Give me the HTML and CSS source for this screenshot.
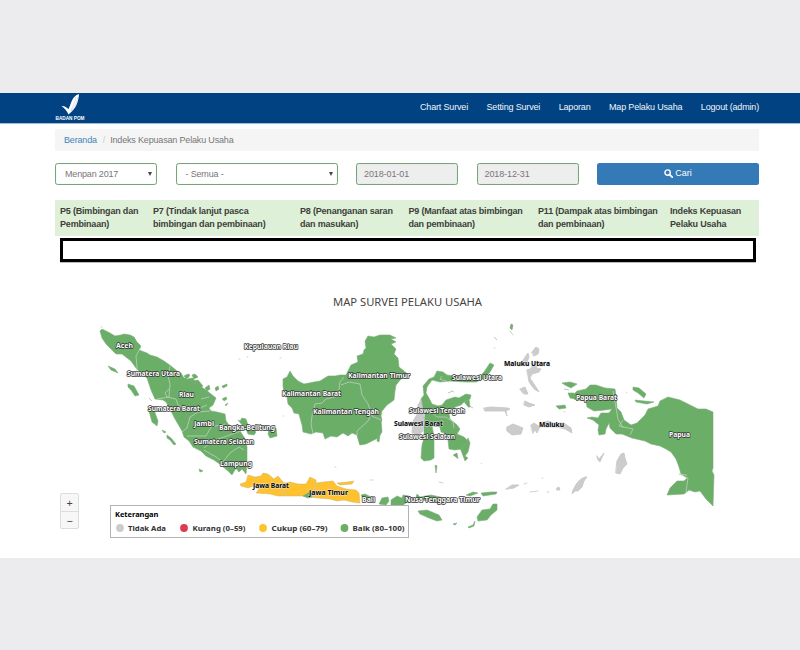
FILE: index.html
```html
<!DOCTYPE html>
<html lang="id">
<head>
<meta charset="utf-8">
<title>Indeks Kepuasan Pelaku Usaha</title>
<link rel="stylesheet" href="styles.css">
</head>
<body>
<div class="page">
  <header class="navbar">
    <svg class="brand" viewBox="0 0 32 30" width="32" height="30">
      <path d="M6.500 13c2.500-.5 5 1 7 3C16 12 16.500 3 24 1c-.5 8-3 15-10.500 20.500C12 18 9.500 15 6.500 13z" fill="#fff"/>
      <path d="M21 4c-1 5-3 10-5.500 14M22.800 4c-1 6-3 11-6.500 14" fill="none" stroke="#9db6d0" stroke-width=".4"/>
      <text x="0.500" y="26.700" textLength="29" lengthAdjust="spacingAndGlyphs">BADAN POM</text>
    </svg>
    <nav class="menu"><a>Chart Survei</a><a>Setting Survei</a><a>Laporan</a><a>Map Pelaku Usaha</a><a>Logout (admin)</a></nav>
  </header>
  <main>
    <div class="crumbs"><a>Beranda</a><i>/</i><span>Indeks Kepuasan Pelaku Usaha</span></div>
    <form class="filters">
      <div class="field">Menpan 2017<b class="caret"></b></div>
      <div class="field">- Semua -<b class="caret"></b></div>
      <div class="field date">2018-01-01</div>
      <div class="field date">2018-12-31</div>
      <div class="button"><svg width="9" height="9" viewBox="0 0 9 9"><circle cx="3.6" cy="3.6" r="2.7" fill="none" stroke="#fff" stroke-width="1.4"/><path d="M5.6 5.6l2.6 2.6" stroke="#fff" stroke-width="1.8" stroke-linecap="round"/></svg>Cari</div>
    </form>
    <div class="thead">
      <div>P5 (Bimbingan dan<br>Pembinaan)</div>
      <div>P7 (Tindak lanjut pasca<br>bimbingan dan pembinaan)</div>
      <div>P8 (Penanganan saran<br>dan masukan)</div>
      <div>P9 (Manfaat atas bimbingan<br>dan pembinaan)</div>
      <div>P11 (Dampak atas bimbingan<br>dan pembinaan)</div>
      <div>Indeks Kepuasan<br>Pelaku Usaha</div>
    </div>
    <div class="result"></div>
  </main>
  <section class="map">
    <svg viewBox="0 290 800 268" width="800" height="268">
      <text class="title" x="333" y="306" textLength="149" lengthAdjust="spacingAndGlyphs">MAP SURVEI PELAKU USAHA</text>
      <g class="good">
        <path d="M100 331L102 329 110 333 115 336 121 335 124 334 130 335 134 337 137 342 141 346 139 350 147 353 150 355 157 357 164 361 171 366 177 371 181 373 184 378 188 378 190 375 188 374 184 376 187 379 193 378 196 383 200 386 206 390 211 394 216 398 213 405 209 408 211 411 217 412 225 414 226 421 229 425 235 427 240 431 244 437 246 441 247 447 247 463 246 474 242 469 239 472 236 468 232 475 228 471 221 465 214 460 206 456 201 451 193 447 189 441 184 437 182 431 178 424 175 419 171 411 166 402 163 400 155 399 151 390 149 384 147 378 143 375 136 368 131 361 122 354 116 354 112 350 106 344 102 338z"/>
        <path d="M108 366l7 3 3 4-7-3zM128 384l6 2 5 9-4 1-4-6-3-3zM149 398l3 3M149 411l5-1 4 11-1 5-5-4zM162 430l4 2-2 1zM167 435l4 3 5 6-2 1-4-5-3-2zM199 469l4 2-3 1zM192 375l3-1 3 3-4 2zM193 381l5-1 5 6-3 2zM205 388l4-3 1 4-3 2zM215 388l3-2 1 3-3 2zM222 386l5-2 0 2-4 2zM208 397l2-1 4 4-3 1zM222 399l4-2 1 2-3 2M225 405l3-2-2 3M238 420l2 1 2-3 4 1 2 6 8 7-2 3-6-1-2-5-3-3zM269 430l7-2 1 8-7 2-2-4z"/>
        <path d="M283 379L287 377 290 371 293 376 298 381 304 384 314 382 320 381 328 376 335 376 340 375 346 375 351 365 358 362 357 356 363 354 364 350 366 348 365 341 368 336 374 337 380 335 390 335 396 338 391 339 396 342 391 344 396 349 394 354 398 358 399 367 404 371 410 376 401 379 396 385 395 391 394 400 387 405 382 411 381 416 382 420 378 426 375 433 366 438 360 445 357 435 352 433 348 436 343 433 337 437 331 436 325 439 323 433 316 432 311 434 303 432 302 425 300 418 299 414 294 413 292 408 288 404 287 397 284 393 283 386z"/>
        <path d="M360 445L357 435 375 415 381 419 382 432 378 438 366 444zM378 431l2-1 0 5-1 7-2-1z"/>
        <path d="M423 386L429 379 434 377 437 371 443 372 447 375 455 376 465 377 479 377 484 372 490 363 494 365 490 372 483 379 476 382 465 382 450 381 440 382 432 380 427 387 426 393 429 398 432 404 438 406 442 405 446 400 455 397 459 398 466 394 471 395 470 399 465 401 461 405 455 407 453 411 449 414 450 419 457 425 460 429 457 434 464 437 469 442 465 446 462 449 455 450 449 449 448 440 447 434 441 432 440 427 432 426 433 431 434 440 434 458 431 460 424 461 421 458 422 445 424 438 424 425 425 414 421 406 421 399 424 395zM464 402l5-3 1 8-2 0M453 455l4-2 1 6M460 448l5-3 3-7 2 5-2 9-3 4 3 2-3 3-3-8zM448 393l5-2M469 406l4 2M494 337l3 3M511 324l2 1-1 5-2-2zM435 465l2 1-1 7z"/>
        <path d="M577 391L586 389 590 385 596 385 605 388 615 389 616 397 617 408 621 412 624 420 631 425 637 423 645 415 648 409 658 406 660 401 668 397 680 400 690 405 698 409 706 409 713 412 713 468 712 471 714 475 713 506 706 499 700 491 695 492 689 490 684 494 667 495 670 488 677 481 684 481 687 478 681 474 679 467 676 459 671 452 666 449 660 446 651 444 645 441 632 438 622 434 616 434 610 428 609 423 606 429 605 434 599 435 598 430 599 425 593 420 587 418 592 417 598 418 601 413 609 413 612 409 605 410 594 411 587 407 586 401 577 400 574 399 573 395z"/>
        <path d="M562 383l8-1 7 2-6 4-6-3zM568 393l6 0 1 6-5-1zM556 406l9-1 1 3-7 1zM564 389l5 1M633 387l6 1 7 6-2 4-6-5-5-3zM635 400l9 1 10 1-7 2-11-2z"/>
        <path d="M361 495l4-1 8 4-3 3-6-1zM379 504l3-6 6-1 1 4-3 4zM391 500l6-4 7 3 3 3-5 4-11-1zM403 495l6 1 5 5-5 2-7-5zM417 494l3 3 11-2 9 2 13 3-10 3-22-3-6 1zM466 495l7-3 5 1-8 3zM481 493l10-1 6 0-1 2-13 2zM418 511l9-1 12 5 3 5-5 1-8-3-9-4zM477 517l5-7 8-1 3-5 4 0 0 6-6 5-4 5-9 1zM468 527l5-2 2-4-1 5-5 2zM453 524l4-1-2 2z"/>
      </g>
      <path class="fair" d="M240 484L246 482 248 475 255 477 261 476 263 473 268 474 274 479 278 476 283 482 285 483 290 482 298 484 306 484 310 477 316 480 316 483 323 482 333 481 337 486 346 489 356 490 359 493 360 503 352 502 344 500 337 501 330 499 318 498 309 497 303 496 295 496 285 496 278 496 270 494 256 493 259 489 253 486 248 488 241 486zM337 483l10-1 7-1-2 3-12 1z"/>
      <path class="good" d="M303 496l7-4 2 5-4 1z"/>
      <g class="none">
        <path d="M421 400L418 405 418 413 413 421 412 433 420 434 423 431 424 417zM532 352l4-5 3 2-1 5-4 2zM525 357l3-4 1 4-3 8-4-2zM527 370l3-1 6-8 4 1-4 6 5 1-2 3-7 2-2 4 6 9 3 5-5-3-5-7-1-6zM520 389l5-2 3 7-4 0zM525 401l4 2 6 2-6 2-5-2zM484 408l7-1 17 1 2 1-4 2 1 5-2-5-12 0-8 0zM507 427l6-3 10 4-2 6-9 1-5-4zM531 425l3-2 6 4-3 6-2-3-2 3zM541 423l7-2 6 2 10 0 7 5 1 5-7-4-8-2-13 0zM617 461l4-7 3-1 1 5 2 6-4 4-3 6-4-1zM574 488l3-5 4-4 4-2 2 0-3 4-2 6-4 4-3 0-3 3 1-4zM597 456l2 3 5-6-4 9-2-2zM506 489l6-4 7 0-5 3zM524 484l3-1M530 492l8-1M547 492l2 0M557 488l2-1 1 3-3 0zM439 482l4 1M510 331l3 4M452 391l2 1M481 463l1 1M542 478l1 0"/>
        <path d="M101 327l1 0M239 359l1 0M247 357l1 0M280 358l1 0M283 416l1 0M335 467l1 0M370 480l3 0M494 348l1 0M564 412l1 0M626 392l1 1"/>
      </g>
      <path class="border" d="M141 347l-5 9 1 11 0 4M170 366l-2 10 2 8-1 13-12 2M169 389l-4 4 2 4 9 2 2 6M178 405l6 3 11 2 12-5M190 417l8-5 12-1M190 417l-3 11-5 4M187 436l19 0 5-9 14-3M204 448l8-7 12-4 17-6M204 450l12 7 7 5M223 462l7-9 9-6 5 3M209 397l-8 2"/>
      <path class="border" d="M344 377l-4 5-2 14-12 3-4 4-7 1-3 12-1 8 2 10M341 385l8-3 11 2 2 11 6 9 4 12 9 4M374 408l-6 13-11 10 0 5M278 483l2 7 7 5M316 482l-3 16M442 376l-2 3 9 3M424 413l8 0 5 4 9 0 7 5 1 6M613 391l5 28 5 9M623 420l-4 6 14 3-3 6M687 475l-8-1 9 4-2 14"/>
      <g class="labels">
        <text x="116" y="347.500" textLength="17" lengthAdjust="spacingAndGlyphs">Aceh</text><text x="127" y="375.500" textLength="53" lengthAdjust="spacingAndGlyphs">Sumatera Utara</text><text x="179" y="396.500" textLength="15" lengthAdjust="spacingAndGlyphs">Riau</text><text x="148" y="411" textLength="52" lengthAdjust="spacingAndGlyphs">Sumatera Barat</text><text x="194" y="425.500" textLength="20" lengthAdjust="spacingAndGlyphs">Jambi</text><text x="219" y="429.500" textLength="56" lengthAdjust="spacingAndGlyphs">Bangka-Belitung</text><text x="194" y="444" textLength="60" lengthAdjust="spacingAndGlyphs">Sumatera Selatan</text><text x="220" y="465.500" textLength="32" lengthAdjust="spacingAndGlyphs">Lampung</text><text x="244" y="348.500" textLength="54" lengthAdjust="spacingAndGlyphs">Kepulauan Riau</text><text x="348" y="378" textLength="62" lengthAdjust="spacingAndGlyphs">Kalimantan Timur</text><text x="282" y="396" textLength="59" lengthAdjust="spacingAndGlyphs">Kalimantan Barat</text><text x="313" y="414" textLength="66" lengthAdjust="spacingAndGlyphs">Kalimantan Tengah</text><text x="452" y="380" textLength="50" lengthAdjust="spacingAndGlyphs">Sulawesi Utara</text><text x="409" y="413" textLength="56" lengthAdjust="spacingAndGlyphs">Sulawesi Tengah</text><text x="399" y="438.500" textLength="56" lengthAdjust="spacingAndGlyphs">Sulawesi Selatan</text><text x="576" y="400" textLength="41" lengthAdjust="spacingAndGlyphs">Papua Barat</text><text x="669" y="437" textLength="21" lengthAdjust="spacingAndGlyphs">Papua</text><text x="362" y="501.500" textLength="13" lengthAdjust="spacingAndGlyphs">Bali</text><text x="405" y="501.500" textLength="75" lengthAdjust="spacingAndGlyphs">Nusa Tenggara Timur</text>
      </g>
      <g class="labels dark">
        <text x="394" y="426" textLength="49" lengthAdjust="spacingAndGlyphs">Sulawesi Barat</text><text x="504" y="365.500" textLength="46" lengthAdjust="spacingAndGlyphs">Maluku Utara</text><text x="539" y="426.500" textLength="25" lengthAdjust="spacingAndGlyphs">Maluku</text><text x="253" y="488" textLength="36" lengthAdjust="spacingAndGlyphs">Jawa Barat</text><text x="309" y="494.500" textLength="39" lengthAdjust="spacingAndGlyphs">Jawa Timur</text>
      </g>
    </svg>
    <div class="zoom"><span>+</span><span>−</span></div>
    <div class="legend">
      <strong>Keterangan</strong>
      <svg width="296" height="14" viewBox="0 0 296 14">
        <circle cx="9" cy="7" r="3.9" fill="#ccc"/><text x="17" y="10" textLength="38" lengthAdjust="spacingAndGlyphs">Tidak Ada</text>
        <circle cx="73" cy="7" r="3.9" fill="#dc3b50"/><text x="81.500" y="10" textLength="53" lengthAdjust="spacingAndGlyphs">Kurang (0–59)</text>
        <circle cx="152" cy="7" r="3.9" fill="#ffc12d"/><text x="160.500" y="10" textLength="56" lengthAdjust="spacingAndGlyphs">Cukup (60–79)</text>
        <circle cx="233.500" cy="7" r="3.9" fill="#6aae68"/><text x="241.500" y="10" textLength="52" lengthAdjust="spacingAndGlyphs">Baik (80–100)</text>
      </svg>
    </div>
  </section>
</div>
</body>
</html>
```
FILE: styles.css
```css
* { box-sizing: border-box; }
body { margin: 0; height: 650px; padding-top: 93px; overflow: hidden; background: #ececee; font: 9px/13px "Liberation Sans", Arial, sans-serif; letter-spacing: -.17px; color: #777; }
.page { height: 465px; background: #fff; }
.navbar { height: 31px; background: #004282; border-bottom: 1px solid #a6b9cf; display: flex; justify-content: space-between; padding: 0 41px 0 55px; }
.brand { display: block; overflow: visible; }
.brand text { font: bold 5.200px "Liberation Sans", sans-serif; fill: #fff; }
svg { letter-spacing: 0; }
.menu { display: flex; gap: 18.500px; line-height: 29px; color: #f2f5f9; white-space: nowrap; }
main { margin: 0 41px 0 55px; }
.crumbs { height: 22px; margin-top: 5px; padding: 0 9px; background: #f5f5f5; border-radius: 2px; line-height: 22px; display: flex; }
.crumbs a { color: #4383b9; }
.crumbs i { font-style: normal; color: #ccc; margin: 0 5px 0 6px; }
.filters { margin-top: 12px; display: grid; grid-template-columns: 102px 162px 102px 102px 162px; column-gap: 18.500px; }
.field { height: 21.500px; border: 1px solid #76a577; border-radius: 2.500px; padding: 0 9px; line-height: 20px; position: relative; box-shadow: inset 0 0 1px #b8cfb9; }
.date { background: #eee; padding-left: 7px; letter-spacing: -.1px; }
.caret { position: absolute; right: 4px; top: 8px; border: 2px solid transparent; border-top: 4px solid #444; border-bottom: 0; }
.button { height: 21.500px; background: #347ab7; color: #fff; border-radius: 2.500px; display: flex; align-items: center; justify-content: center; gap: 2px; letter-spacing: 0; }
.thead { height: 36px; margin-top: 15.500px; padding: 5px 0 0 5px; background: #dff0d8; color: #3c403a; font-weight: bold; letter-spacing: -.19px; line-height: 12.500px; display: grid; grid-template-columns: 93px 147px 108.500px 129.500px 132px 1fr; white-space: nowrap; }
.result { height: 24px; margin: 2px 3px 0 5px; border: 3px solid #000; box-shadow: 0 1px 0 #bbb; }
.map { position: relative; height: 268px; margin-top: 28px; }
.map > svg { display: block; }
.title { font: 11px "Noto Sans", sans-serif; fill: #444; }
.good { fill: #6aae68; stroke: #7dad7c; stroke-width: .6; stroke-linejoin: round; }
.fair { fill: #ffc12d; stroke: #c9b675; stroke-width: .5; }
.none { fill: #ccc; stroke: #c5c5c5; stroke-width: .8; stroke-linecap: round; }
.border { fill: none; stroke: #bfcfbb; stroke-width: .8; stroke-linejoin: round; }
.labels { font: bold 7.200px "Noto Sans", sans-serif; fill: #fff; stroke: #333; stroke-width: 1.500px; paint-order: stroke; stroke-linejoin: round; }
.dark { fill: #000; stroke: #eee; stroke-width: .8px; }
.zoom { position: absolute; left: 60px; top: 203px; width: 19px; height: 36px; border: 1px solid #ddd; border-radius: 2px; background: #f7f7f7; color: #444; font: 11px/17px "Noto Sans", sans-serif; text-align: center; display: grid; grid-template-rows: 1fr 1fr; }
.zoom span:first-child { border-bottom: 1px solid #ddd; }
.legend { position: absolute; left: 110px; top: 215px; width: 299px; height: 33px; border: 1px solid #b4b4b4; background: #fff; color: #000; }
.legend strong { display: block; margin-left: 4px; padding-top: 3px; font: bold 7.500px/10px "Noto Sans", sans-serif; letter-spacing: -.05px; }
.legend svg { display: block; margin-top: 2px; }
.legend text { font: bold 7.700px "Noto Sans", sans-serif; fill: #333; }
```
